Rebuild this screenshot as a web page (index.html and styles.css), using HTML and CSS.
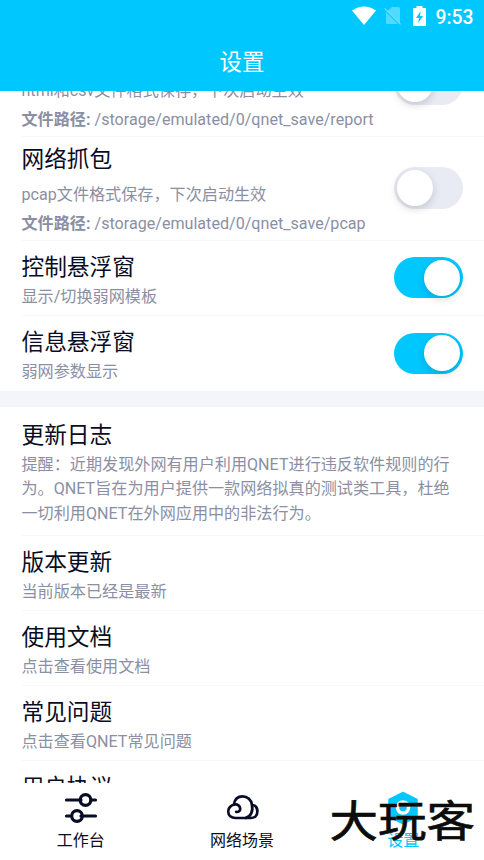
FILE: index.html
```
<!DOCTYPE html>
<html lang="zh-CN">

<head>
    <meta charset="UTF-8">
    <meta name="viewport" content="width=device-width, initial-scale=1.0">
    <title>设置</title>
    <link rel="stylesheet" href="styles.css">
</head>

<body>
    <div class="screen">
        <!-- Header -->
        <header class="header">
            <div class="status-bar">
                <svg class="wifi" width="24" height="20" viewBox="0 0 24 20">
                    <path d="M0 4.5Q12-3.7 24 4.5L12 19Z" fill="#fff" />
                </svg>
                <svg class="sim" width="18" height="18" viewBox="0 0 18 18">
                    <path d="M8 0h6.5q1.5 0 1.5 1.5v14.7L3.6 3.7zM2 5l12 12H3.5Q2 17 2 15.5z" fill="#fff" opacity=".32" />
                    <path d="M.6 1.4L16.6 17.4" stroke="#fff" stroke-width="1.3" opacity=".4" />
                </svg>
                <svg class="battery" width="13" height="20" viewBox="0 0 13 20">
                    <path d="M3.5 0h6v2H13v18H0V2h3.5z" fill="#fff" />
                    <path d="M7.7 5L3 12h3l-.8 5L10 10H7z" fill="#00c8ff" />
                </svg>
                <span>9:53</span>
            </div>
            <h1>设置</h1>
        </header>

        <!-- Settings List -->
        <main class="settings">
            <section class="group">
                <div class="item tall first">
                    <div class="info">
                        <h2>网络报告</h2>
                        <p>html和csv文件格式保存，下次启动生效</p>
                        <p class="path"><strong>文件路径:</strong> /storage/emulated/0/qnet_save/report</p>
                    </div>
                    <span class="switch"></span>
                </div>
                <div class="item tall">
                    <div class="info">
                        <h2>网络抓包</h2>
                        <p>pcap文件格式保存，下次启动生效</p>
                        <p class="path"><strong>文件路径:</strong> /storage/emulated/0/qnet_save/pcap</p>
                    </div>
                    <span class="switch"></span>
                </div>
                <div class="item">
                    <div class="info">
                        <h2>控制悬浮窗</h2>
                        <p>显示/切换弱网模板</p>
                    </div>
                    <span class="switch on"></span>
                </div>
                <div class="item">
                    <div class="info">
                        <h2>信息悬浮窗</h2>
                        <p>弱网参数显示</p>
                    </div>
                    <span class="switch on"></span>
                </div>
            </section>

            <section class="group">
                <div class="item log">
                    <div class="info">
                        <h2>更新日志</h2>
                        <p>提醒：近期发现外网有用户利用QNET进行违反软件规则的行<br>为。QNET旨在为用户提供一款网络拟真的测试类工具，杜绝<br>一切利用QNET在外网应用中的非法行为。</p>
                    </div>
                </div>
                <div class="item">
                    <div class="info">
                        <h2>版本更新</h2>
                        <p>当前版本已经是最新</p>
                    </div>
                </div>
                <div class="item">
                    <div class="info">
                        <h2>使用文档</h2>
                        <p>点击查看使用文档</p>
                    </div>
                </div>
                <div class="item">
                    <div class="info">
                        <h2>常见问题</h2>
                        <p>点击查看QNET常见问题</p>
                    </div>
                </div>
                <div class="item">
                    <div class="info">
                        <h2>用户协议</h2>
                    </div>
                </div>
            </section>
        </main>

        <!-- Tab Bar -->
        <nav class="tabs">
            <a class="tab">
                <svg width="34" height="34" viewBox="0 0 34 34" fill="none" stroke="#080c24" stroke-width="3.2" stroke-linecap="round">
                    <path d="M2.500 9H17M28 9h3.500M2.500 25H6M17 25h14.500" />
                    <circle cx="21.500" cy="9" r="5.300" />
                    <circle cx="13" cy="25" r="5.300" />
                </svg>
                <span>工作台</span>
            </a>
            <a class="tab">
                <svg width="34" height="34" viewBox="0 0 34 34" fill="none" stroke="#080c24" stroke-width="2.7" stroke-linecap="round" stroke-linejoin="round">
                    <path d="M11.2 20.9c2.3.5 4.2-1 4-3.400-.2-2.900-2.700-4.300-5.100-4-4 .4-6.900 3.300-6.900 6.700 0 4.200 3.200 6.800 7.400 6.800h15.100c4 0 6.700-2.700 6.700-6.500 0-3.500-2.100-6.100-5.300-6.800C26.300 9 22.500 5.300 17.600 5.300c-4.500 0-7.900 2.900-8.700 8" />
                    <path d="M26.900 13.700c1.500 6.500-1.200 12.200-6.500 13.300" />
                </svg>
                <span>网络场景</span>
            </a>
            <a class="tab active">
                <svg width="34" height="34" viewBox="0 0 34 34">
                    <path d="M17 1.500L31 8.500V26L17 32.500L3 26V8.500Z" fill="#00c8ff" stroke="#00c8ff" stroke-width="1.500" stroke-linejoin="round" />
                    <circle cx="17" cy="16.500" r="5.500" fill="none" stroke="#fff" stroke-width="3.500" />
                </svg>
                <span>设置</span>
            </a>
        </nav>
        <div class="watermark">大玩客</div>
    </div>
</body>

</html>
```
FILE: styles.css
```
* {
    box-sizing: border-box;
}

body {
    margin: 0;
    font-family: Roboto, "Noto Sans CJK SC", sans-serif;
    background: #fff;
    color: #080c24;
}

h1,
h2,
p {
    margin: 0;
    font-weight: normal;
}

.screen {
    position: relative;
    display: flex;
    flex-direction: column;
    height: 860px;
    overflow: hidden;
}

.header {
    flex: none;
    height: 91px;
    background: #00c8ff;
    color: #fff;
}

.status-bar {
    display: flex;
    justify-content: flex-end;
    align-items: center;
    height: 32px;
    padding-right: 10.5px;
    font-size: 19.3px;
    font-weight: 500;
}

.status-bar span {
    line-height: 32px;
    margin-top: 3px;
}

.wifi {
    margin-right: 8px;
}

.sim {
    margin-right: 11px;
}

.battery {
    margin-right: 10px;
}

.header h1 {
    font-size: 22.5px;
    line-height: 61px;
    text-align: center;
}

.settings {
    flex: 1;
    min-height: 0;
    overflow: hidden;
}

.group + .group {
    border-top: 16px solid #f3f5fa;
}

.item {
    display: flex;
    align-items: center;
    justify-content: space-between;
    height: 75.3px;
    margin-left: 21.5px;
    padding-right: 21.5px;
    border-bottom: 1px solid #f7f7fb;
}

.item:last-child {
    border-bottom: none;
}

.item h2 {
    font-size: 22.7px;
    line-height: 30px;
}

.item p {
    font-size: 16.13px;
    line-height: 24.2px;
    color: #8b8fa3;
    margin-top: 2px;
    white-space: nowrap;
}

.info {
    align-self: flex-start;
    padding-top: 12px;
}

.tall {
    height: 104px;
}

.tall .info {
    padding-top: 8px;
}

.tall p {
    margin-top: 8px;
}

.tall .path {
    margin-top: 5px;
}

.first {
    margin-top: -58.5px;
}

.log {
    height: 128.5px;
}

.log .info {
    padding-top: 14px;
}

/* Switch */
.switch {
    flex: none;
    width: 68.5px;
    height: 41.5px;
    padding: 2.7px;
    border-radius: 21px;
    background: #e8ebf4;
}

.switch::after {
    content: "";
    display: block;
    width: 36px;
    height: 36px;
    border-radius: 50%;
    background: #fff;
    box-shadow: 0 3px 8px rgba(0, 0, 0, 0.16);
}

.switch.on {
    background: #00c8ff;
}

.switch.on::after {
    margin-left: auto;
}

/* Bottom tabs */
.tabs {
    flex: none;
    display: flex;
    height: 77px;
    background: #fff;
}

.tab {
    flex: 1;
    display: flex;
    flex-direction: column;
    align-items: center;
    padding-top: 8px;
    font-size: 16px;
    line-height: 24px;
}

.tab span {
    margin-top: 4px;
}

.tab.active {
    color: #00c8ff;
}

.watermark {
    position: absolute;
    right: 9px;
    bottom: 9px;
    font-size: 48.5px;
    line-height: 56px;
    color: #0c0c0c;
    -webkit-text-stroke: 0.7px #0c0c0c;
    text-shadow: 0 0 1px #c9c29b;
    transform: scaleY(0.9);
}
```
